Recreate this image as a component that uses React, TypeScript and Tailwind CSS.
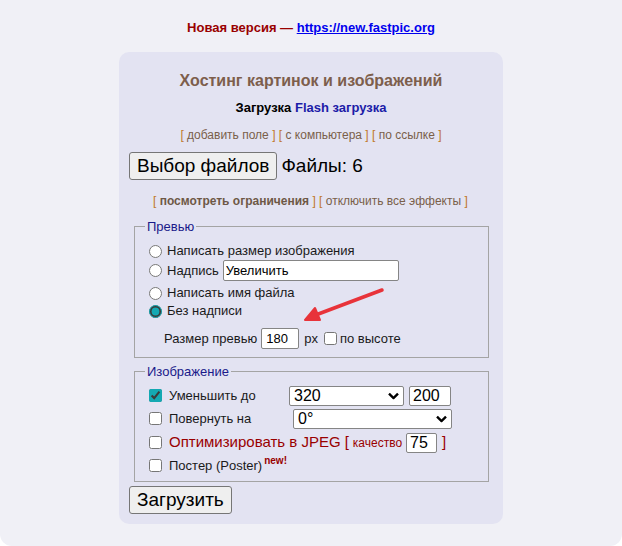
import React from "react";

const font = { fontFamily: '"Liberation Sans", Arial, sans-serif' };

function Bracket({ children }: { children: React.ReactNode }) {
    return (
        <span className="text-[#c0772a]">
            [ <span className="text-[#7a5f4a]">{children}</span> ]
        </span>
    );
}

function Select({ value, className }: { value: string; className: string }) {
    return (
        <div className={"relative " + className}>
            <select
                defaultValue={value}
                className="w-full h-full appearance-none bg-white border border-[#858585] rounded-[2px] pl-[4px] text-[16px] leading-[18px] text-black outline-none"
            >
                <option>{value}</option>
            </select>
            <svg className="absolute right-[5px] top-1/2 -translate-y-1/2 pointer-events-none" width="11" height="7" viewBox="0 0 11 7">
                <path d="M1 1.2 L5.5 5.5 L10 1.2" fill="none" stroke="#000" strokeWidth="2.4" />
            </svg>
        </div>
    );
}

export default function App() {
    return (
        <div className="w-[622px] h-[546px] bg-white" style={font}>
            <div className="h-full rounded-b-[12px] bg-[#f0f0f6] pt-[20px]">
                <p className="text-center font-bold text-[13px] leading-[16px] text-[#990000]">
                    Новая версия — <a href="#" className="text-[#0000ee] underline">https://new.fastpic.org</a>
                </p>

                <div className="relative w-[384px] mx-auto mt-[16px] bg-[#e3e3f2] rounded-[10px] px-[10px] pt-[19px] pb-[10px]">
                    <h1 className="text-center font-bold text-[16px] leading-[20px] text-[#7d5e4c]">
                        Хостинг картинок и изображений
                    </h1>
                    <p className="text-center font-bold text-[13px] leading-[16px] mt-[9px] text-black">
                        Загрузка <span className="text-[#1c1ca8]">Flash загрузка</span>
                    </p>
                    <p className="text-center text-[12px] leading-[15px] mt-[12px]">
                        <Bracket>добавить поле</Bracket> <Bracket>с компьютера</Bracket> <Bracket>по ссылке</Bracket>
                    </p>

                    <div className="flex items-center mt-[9px]">
                        <button className="h-[28px] px-[7px] bg-[#efefef] border border-[#767676] rounded-[3px] text-[19px] leading-[22px] text-black">
                            Выбор файлов
                        </button>
                        <span className="ml-[4px] text-[19px] text-black">Файлы: 6</span>
                    </div>

                    <p className="text-[12px] leading-[15px] mt-[13px] ml-[24px]">
                        <span className="text-[#c0772a]">
                            [ <span className="text-[#6e5846] font-bold">посмотреть ограничения</span> ]
                        </span>{" "}
                        <Bracket>отключить все эффекты</Bracket>
                    </p>

                    <fieldset className="border border-[#a4a4a4] ml-[5px] mr-[4px] mt-[8px] px-[10px] pb-[8px] text-[13px] text-[#1a1a1a]">
                        <legend className="px-[2px] text-[#1a1a8a] text-[13px]">Превью</legend>
                        <label className="flex items-center h-[18px] mt-[6px]">
                            <input type="radio" name="p" className="w-[13px] h-[13px] ml-[4px] mr-[5px]" />
                            Написать размер изображения
                        </label>
                        <label className="flex items-center h-[21px]">
                            <input type="radio" name="p" className="w-[13px] h-[13px] ml-[4px] mr-[5px]" />
                            Надпись
                            <input
                                type="text"
                                defaultValue="Увеличить"
                                className="ml-[4px] w-[176px] h-[21px] bg-white border border-[#858585] rounded-[2px] px-[2px] text-[13px] text-black outline-none"
                            />
                        </label>
                        <label className="flex items-center h-[18px] mt-[3px]">
                            <input type="radio" name="p" className="w-[13px] h-[13px] ml-[4px] mr-[5px]" />
                            Написать имя файла
                        </label>
                        <label className="flex items-center h-[18px]">
                            <input type="radio" name="p" defaultChecked className="w-[13px] h-[13px] ml-[4px] mr-[5px] accent-[#14a9b3]" />
                            Без надписи
                        </label>
                        <div className="flex items-center h-[21px] mt-[8px] ml-[19px]">
                            Размер превью
                            <input
                                type="text"
                                defaultValue="180"
                                className="ml-[4px] w-[38px] h-[21px] bg-white border border-[#858585] rounded-[2px] px-[4px] text-[13px] text-black outline-none"
                            />
                            <span className="ml-[5px]">px</span>
                            <input type="checkbox" className="w-[13px] h-[13px] ml-[6px] mr-[3px]" />
                            по высоте
                        </div>
                    </fieldset>

                    <fieldset className="border border-[#a4a4a4] ml-[5px] mr-[4px] mt-[4px] px-[10px] pb-[4px] text-[13px] text-[#1a1a1a]">
                        <legend className="px-[2px] text-[#1a1a8a] text-[13px]">Изображение</legend>
                        <div className="flex items-center h-[22px] mt-[3px]">
                            <input type="checkbox" defaultChecked className="w-[13px] h-[13px] ml-[4px] mr-[7px] accent-[#14a9b3]" />
                            <span className="w-[120px]">Уменьшить до</span>
                            <Select value="320" className="w-[115px] h-[20px]" />
                            <input
                                type="text"
                                defaultValue="200"
                                className="ml-[5px] w-[42px] h-[20px] bg-white border border-[#858585] rounded-[2px] px-[3px] text-[16px] text-black outline-none"
                            />
                        </div>
                        <div className="flex items-center h-[22px] mt-[1px]">
                            <input type="checkbox" className="w-[13px] h-[13px] ml-[4px] mr-[7px]" />
                            <span className="w-[124px]">Повернуть на</span>
                            <Select value="0°" className="w-[159px] h-[20px]" />
                        </div>
                        <div className="flex items-center h-[22px] mt-[2px]">
                            <input type="checkbox" className="w-[13px] h-[13px] ml-[4px] mr-[7px]" />
                            <span className="text-[15px] text-[#990000]">Оптимизировать в JPEG</span>
                            <span className="ml-[4px] text-[15px] text-[#990000]">[</span>
                            <span className="ml-[4px] text-[12px] text-[#990000]">качество</span>
                            <input
                                type="text"
                                defaultValue="75"
                                className="ml-[4px] w-[31px] h-[20px] bg-white border border-[#858585] rounded-[2px] px-[3px] text-[16px] text-black outline-none"
                            />
                            <span className="ml-[5px] text-[15px] text-[#990000]">]</span>
                        </div>
                        <div className="flex items-center h-[22px] mt-[1px]">
                            <input type="checkbox" className="w-[13px] h-[13px] ml-[4px] mr-[7px]" />
                            <span>Постер (Poster)</span>
                            <span className="relative -top-[5px] ml-[2px] text-[10px] leading-[11px] font-bold text-[#990000]">new!</span>
                        </div>
                    </fieldset>

                    <button className="mt-[4px] h-[28px] px-[7px] bg-[#efefef] border border-[#767676] rounded-[3px] text-[19px] leading-[22px] text-black">
                        Загрузить
                    </button>

                    <svg className="absolute left-[180px] top-[233px] pointer-events-none" width="90" height="40" viewBox="0 0 90 40">
                        <path d="M83 5 L14 31" stroke="#e8333a" strokeWidth="3.5" strokeLinecap="round" />
                        <path d="M6 35 L16 23 L21 35 Z" fill="#e8333a" stroke="#e8333a" strokeWidth="2" strokeLinejoin="round" />
                    </svg>
                </div>
            </div>
        </div>
    );
}
